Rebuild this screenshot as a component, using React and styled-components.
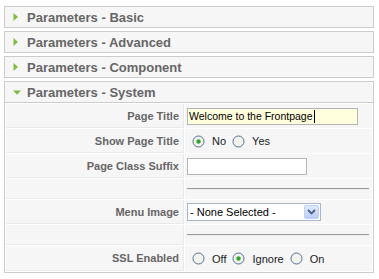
import React from "react";
import styled, { createGlobalStyle } from "styled-components";

const GlobalStyle = createGlobalStyle`
    body {
        margin: 0;
        background: #ffffff;
        font-family: "Liberation Sans", Arial, sans-serif;
    }
`;

const sections = ["Basic", "Advanced", "Component"];

function Arrow({ open }) {
    return (
        <ArrowBox>
            {open ? (
                <svg width="8" height="5" viewBox="0 0 8 5">
                    <polygon points="0,0.5 8,0.5 4,4.8" fill="#7dba3c" />
                </svg>
            ) : (
                <svg width="5" height="8" viewBox="0 0 5 8">
                    <polygon points="0.5,0 5,4 0.5,8" fill="#82bd3f" />
                </svg>
            )}
        </ArrowBox>
    );
}

function Radio({ checked, label }) {
    return (
        <RadioItem>
            <svg width="13" height="13" viewBox="0 0 13 13">
                <circle cx="6.5" cy="6.5" r="5.5" fill="#f3f3ee" stroke="#4f6f96" strokeWidth="1" />
                {checked && <circle cx="6.5" cy="6.5" r="2.2" fill="#37a52a" />}
            </svg>
            <RadioLabel>{label}</RadioLabel>
        </RadioItem>
    );
}

export default function App() {
    return (
        <>
            <GlobalStyle />
            <Pane>
                {sections.map((name) => (
                    <Panel key={name}>
                        <Title>
                            <Arrow />
                            Parameters - {name}
                        </Title>
                    </Panel>
                ))}
                <Panel>
                    <Title open>
                        <Arrow open />
                        Parameters - System
                    </Title>
                    <ParamList>
                        <ParamRow height={24}>
                            <Key>Page Title</Key>
                            <Value>
                                <TextBox width={171} focused>
                                    Welcome to the Frontpage<Caret />
                                </TextBox>
                            </Value>
                        </ParamRow>
                        <ParamRow height={24}>
                            <Key>Show Page Title</Key>
                            <Value>
                                <Radio checked label="No" />
                                <Radio label="Yes" />
                            </Value>
                        </ParamRow>
                        <ParamRow height={24}>
                            <Key>Page Class Suffix</Key>
                            <Value>
                                <TextBox width={120} />
                            </Value>
                        </ParamRow>
                        <ParamRow height={20}>
                            <Key />
                            <Value>
                                <Rule />
                            </Value>
                        </ParamRow>
                        <ParamRow height={24}>
                            <Key>Menu Image</Key>
                            <Value>
                                <Select>
                                    <span>- None Selected -</span>
                                    <SelectButton>
                                        <svg width="9" height="6" viewBox="0 0 9 6">
                                            <polyline points="1,1 4.5,4.5 8,1" fill="none" stroke="#4d6185" strokeWidth="1.8" />
                                        </svg>
                                    </SelectButton>
                                </Select>
                            </Value>
                        </ParamRow>
                        <ParamRow height={20}>
                            <Key />
                            <Value>
                                <Rule />
                            </Value>
                        </ParamRow>
                        <ParamRow height={25}>
                            <Key>SSL Enabled</Key>
                            <Value>
                                <Radio label="Off" />
                                <Radio checked label="Ignore" />
                                <Radio label="On" />
                            </Value>
                        </ParamRow>
                    </ParamList>
                </Panel>
            </Pane>
        </>
    );
}

const Pane = styled.div`
    width: 370px;
    margin: 6px 0 0 4px;
`;

const Panel = styled.div`
    border: 1px solid #cccccc;
    background: #f6f6f6;
    margin-bottom: 3px;
`;

const Title = styled.h3`
    margin: 0;
    height: 20px;
    display: flex;
    align-items: center;
    padding-left: 8px;
    font-size: 13px;
    font-weight: bold;
    color: #666666;
    border-bottom: ${props => props.open ? "1px solid #cccccc" : "none"};
`;

const ArrowBox = styled.span`
    width: 14px;
    display: flex;
    align-items: center;
`;

const ParamList = styled.div`
    display: flex;
    flex-direction: column;
    gap: 1px;
    padding: 1px;
    background: #ffffff;
`;

const ParamRow = styled.div`
    display: flex;
    gap: 1px;
    height: ${props => props.height}px;
`;

const Key = styled.div`
    width: 178px;
    box-sizing: border-box;
    display: flex;
    align-items: center;
    justify-content: flex-end;
    padding-right: 4px;
    background: #f6f6f6;
    border-bottom: 1px solid #e9e9e9;
    border-right: 1px solid #e9e9e9;
    font-size: 11px;
    font-weight: bold;
    color: #666666;
`;

const Value = styled.div`
    flex: 1;
    display: flex;
    align-items: center;
    padding: 0 3px 0 2px;
    background: #f6f6f6;
    font-size: 11px;
    color: #222222;
`;

const TextBox = styled.div`
    width: ${props => props.width}px;
    height: 17px;
    box-sizing: border-box;
    display: flex;
    align-items: center;
    padding-left: 1px;
    border: 1px solid #b5b5b5;
    background: ${props => props.focused ? "#ffffdd" : "#ffffff"};
    font-size: 10.5px;
    color: #000000;
`;

const Caret = styled.span`
    width: 1px;
    height: 13px;
    margin-left: 1px;
    background: #000000;
`;

const RadioItem = styled.label`
    display: flex;
    align-items: center;
    margin-left: 5px;
    margin-right: 1px;

    svg {
        margin-right: 7px;
    }
`;

const RadioLabel = styled.span`
    font-size: 11px;
    color: #222222;
`;

const Rule = styled.hr`
    flex: 1;
    margin: 0;
    height: 0;
    border: none;
    border-top: 1px solid #9a9a9a;
    border-bottom: 1px solid #ececec;
`;

const Select = styled.div`
    width: 134px;
    height: 18px;
    box-sizing: border-box;
    display: flex;
    align-items: center;
    justify-content: space-between;
    padding: 0 1px 0 2px;
    border: 1px solid #a9b8c9;
    background: #ffffff;
    font-size: 11px;
    color: #000000;
`;

const SelectButton = styled.span`
    width: 15px;
    height: 14px;
    box-sizing: border-box;
    display: flex;
    align-items: center;
    justify-content: center;
    border: 1px solid #bcd0f4;
    border-radius: 2px;
    background: linear-gradient(#e0e9fd, #b9cdf7);
`;
